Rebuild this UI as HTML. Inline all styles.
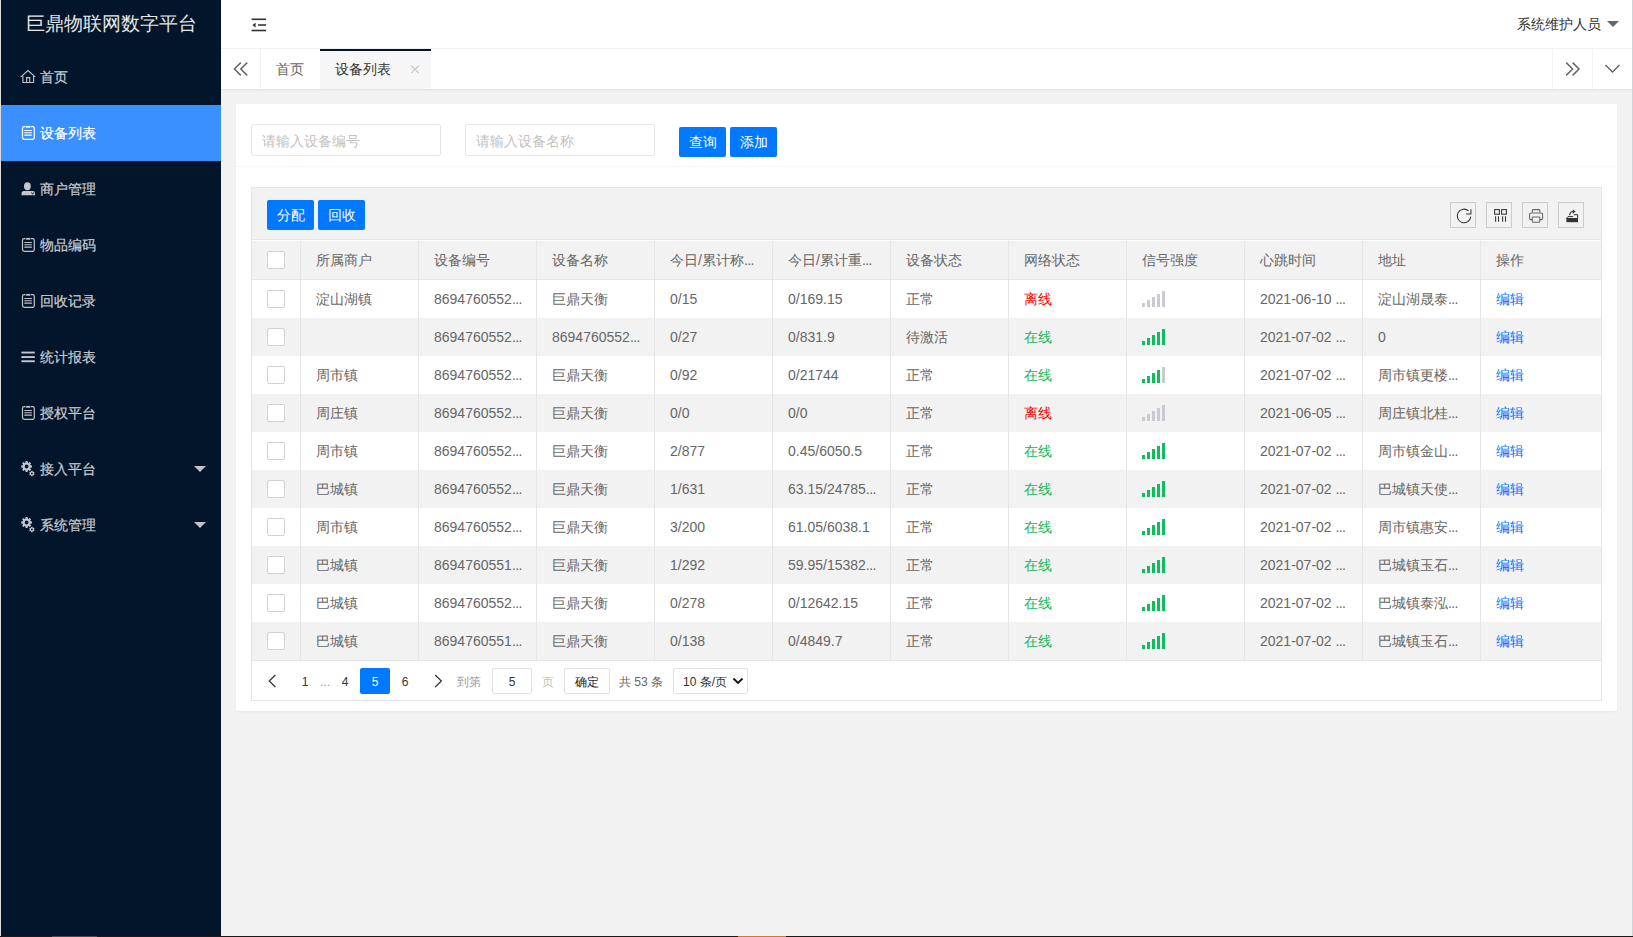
<!DOCTYPE html>
<html><head><meta charset="utf-8">
<style>
*{box-sizing:border-box;margin:0;padding:0}
html,body{width:1633px;height:937px;overflow:hidden;background:#f2f2f2;font-family:"Liberation Sans",sans-serif;font-size:14px;color:#666}
.a{position:absolute}
#edgeL{left:0;top:0;width:1px;height:937px;background:#dcdcdc}
#edgeR{left:1632px;top:0;width:1px;height:937px;background:#cfd2d6}
#bottom{left:0;top:936px;width:1633px;height:1px;background:#1a1a1a}
#side{left:1px;top:0;width:220px;height:936px;background:#03152a}
#logo{left:0;top:0;width:220px;height:49px;line-height:48px;text-align:center;color:#e6e6e6;font-size:19px}
.mi{left:0;width:220px;height:56px;line-height:56px;color:#c9ccd1;font-size:14px;-webkit-text-stroke:0.2px currentColor}
.mi .ic{position:absolute;left:21px;top:22px;width:14px;height:14px}
.mi .tx{position:absolute;left:39px;top:0}
.mi.on{background:#3a90fe;color:#fff}
.mi .dd{position:absolute;left:193px;top:25px;width:0;height:0;border-left:6px solid transparent;border-right:6px solid transparent;border-top:6px solid #c2c2c2}
#hdr{left:221px;top:0;width:1411px;height:48px;background:#fff}
#tabs{left:221px;top:48px;width:1411px;height:41px;background:#fff;border-top:1px solid #f0f0f0;box-shadow:0 1px 2px rgba(0,0,0,.08)}

#tog{left:251px;top:17px}
#user{left:1517px;top:14px;font-size:14px;color:#333;line-height:20px}
#utri{left:1607px;top:21px;width:0;height:0;border-left:6px solid transparent;border-right:6px solid transparent;border-top:6px solid #666}
.tb{top:49px;height:40px;line-height:40px}
#card{left:236px;top:104px;width:1381px;height:607px;background:#fff;border-radius:2px;box-shadow:0 1px 2px rgba(0,0,0,.05)}
.inp{top:124px;width:190px;height:32px;border:1px solid #e6e6e6;border-radius:2px;background:#fff;color:#c2c2c2;font-size:14px;line-height:32px;padding-left:10px}
.btn{height:30px;line-height:30px;width:47px;background:#0078ff;color:#fff;border-radius:2px;text-align:center;font-size:14px}
#sep{left:236px;top:166px;width:1381px;height:1px;background:#f6f6f6}
#tbl{left:251px;top:187px;width:1351px;height:514px;border:1px solid #e6e6e6;background:#fff}
#tool{left:252px;top:188px;width:1349px;height:52px;background:#f2f2f2;border-bottom:1px solid #e6e6e6}
.ti{top:202px;width:26px;height:26px;border:1px solid #ccc;background:#f2f2f2}

.td{height:38px;line-height:38px;white-space:nowrap;font-size:14px;color:#666}
.td.on{color:#12b85e}.td.off{color:#ff0000}.td.ed{color:#0078ff}
.cb{left:267px;width:18px;height:18px;border:1px solid #d2d2d2;border-radius:2px;background:#fff}
.sig{width:18px;height:16px}.sig i{position:absolute;width:3px}

.pg{top:668px;height:26px;line-height:28px;font-size:12px;white-space:nowrap}
.el{letter-spacing:-0.6px}
</style></head><body>
<div class="a" id="edgeL"></div>
<div class="a" id="side">
  <div class="a" id="logo">巨鼎物联网数字平台</div>
  <div class="a mi" style="top:49px"><span class="tx">首页</span></div>
  <div class="a mi on" style="top:105px"><span class="tx">设备列表</span></div>
  <div class="a mi" style="top:161px"><span class="tx">商户管理</span></div>
  <div class="a mi" style="top:217px"><span class="tx">物品编码</span></div>
  <div class="a mi" style="top:273px"><span class="tx">回收记录</span></div>
  <div class="a mi" style="top:329px"><span class="tx">统计报表</span></div>
  <div class="a mi" style="top:385px"><span class="tx">授权平台</span></div>
  <div class="a mi" style="top:441px"><span class="tx">接入平台</span></div>
  <div class="a mi" style="top:497px"><span class="tx">系统管理</span></div>
</div>
<div class="a" id="hdr"></div>
<svg class="a" style="left:0;top:0;z-index:5" width="221" height="560" viewBox="0 0 221 560">
 <g fill="none" stroke="#c3c6cd" stroke-width="1.1">
  <path d="M20.8 76.8 L28 70.6 L35.2 76.8"/>
  <path d="M22.9 76 V82.5 H33.6 V76"/>
  <path d="M26.6 82.5 V77.6 H29.7 V82.5"/>
 </g>
 <g transform="translate(0,0)" stroke="#fff" fill="#fff">
   <path fill="none" stroke-width="1.2" d="M25.6 126.7 H24.2 Q22.5 126.7 22.5 128.4 V137.6 Q22.5 139.3 24.2 139.3 H32.6 Q34.3 139.3 34.3 137.6 V128.4 Q34.3 126.7 32.6 126.7 H30.8"/>
   <rect x="26.2" y="125.9" width="4" height="1.8" stroke="none"/>
   <path fill="none" stroke-width="1.1" d="M24.3 130.5 H31.9 M24.3 132.8 H31.9 M24.3 135.1 H31.9"/>
  </g>
 <g transform="translate(0,112)" stroke="#c3c6cd" fill="#c3c6cd">
   <path fill="none" stroke-width="1.2" d="M25.6 126.7 H24.2 Q22.5 126.7 22.5 128.4 V137.6 Q22.5 139.3 24.2 139.3 H32.6 Q34.3 139.3 34.3 137.6 V128.4 Q34.3 126.7 32.6 126.7 H30.8"/>
   <rect x="26.2" y="125.9" width="4" height="1.8" stroke="none"/>
   <path fill="none" stroke-width="1.1" d="M24.3 130.5 H31.9 M24.3 132.8 H31.9 M24.3 135.1 H31.9"/>
  </g>
 <g transform="translate(0,168)" stroke="#c3c6cd" fill="#c3c6cd">
   <path fill="none" stroke-width="1.2" d="M25.6 126.7 H24.2 Q22.5 126.7 22.5 128.4 V137.6 Q22.5 139.3 24.2 139.3 H32.6 Q34.3 139.3 34.3 137.6 V128.4 Q34.3 126.7 32.6 126.7 H30.8"/>
   <rect x="26.2" y="125.9" width="4" height="1.8" stroke="none"/>
   <path fill="none" stroke-width="1.1" d="M24.3 130.5 H31.9 M24.3 132.8 H31.9 M24.3 135.1 H31.9"/>
  </g>
 <g transform="translate(0,280)" stroke="#c3c6cd" fill="#c3c6cd">
   <path fill="none" stroke-width="1.2" d="M25.6 126.7 H24.2 Q22.5 126.7 22.5 128.4 V137.6 Q22.5 139.3 24.2 139.3 H32.6 Q34.3 139.3 34.3 137.6 V128.4 Q34.3 126.7 32.6 126.7 H30.8"/>
   <rect x="26.2" y="125.9" width="4" height="1.8" stroke="none"/>
   <path fill="none" stroke-width="1.1" d="M24.3 130.5 H31.9 M24.3 132.8 H31.9 M24.3 135.1 H31.9"/>
  </g>
 <!-- person -->
 <g fill="#c3c6cd">
  <ellipse cx="27.4" cy="186.2" rx="3.4" ry="4"/>
  <path d="M21.5 195.2 V193 Q21.5 191 24 191 H33 Q35 191 35 193 V195.2 Z"/>
  <path d="M31.5 192.3 L32.6 194.3 L33.7 192.3" stroke="#03152a" stroke-width="0.8" fill="none"/>
 </g>
 <!-- lines -->
 <g fill="#c3c6cd">
  <rect x="21.4" y="351.6" width="13.4" height="1.9"/>
  <rect x="21.4" y="356.1" width="13.4" height="1.9"/>
  <rect x="21.4" y="360.3" width="13.4" height="1.9"/>
 </g>
 <g fill="#c3c6cd" fill-rule="evenodd">
  <path d="M25.63 461.09 L27.57 461.09 L27.80 462.58 L28.52 462.88 L29.74 461.99 L31.11 463.36 L30.22 464.58 L30.52 465.30 L32.01 465.53 L32.01 467.47 L30.52 467.70 L30.22 468.42 L31.11 469.64 L29.74 471.01 L28.52 470.12 L27.80 470.42 L27.57 471.91 L25.63 471.91 L25.40 470.42 L24.68 470.12 L23.46 471.01 L22.09 469.64 L22.98 468.42 L22.68 467.70 L21.19 467.47 L21.19 465.53 L22.68 465.30 L22.98 464.58 L22.09 463.36 L23.46 461.99 L24.68 462.88 L25.40 462.58 Z M28.50 466.50 A1.9 1.9 0 1 0 24.70 466.50 A1.9 1.9 0 1 0 28.50 466.50 Z"/>
  <path d="M31.25 470.78 L32.55 470.78 L32.63 471.53 L33.24 471.88 L33.93 471.57 L34.58 472.70 L33.97 473.15 L33.97 473.85 L34.58 474.30 L33.93 475.43 L33.24 475.12 L32.63 475.47 L32.55 476.22 L31.25 476.22 L31.17 475.47 L30.56 475.12 L29.87 475.43 L29.22 474.30 L29.83 473.85 L29.83 473.15 L29.22 472.70 L29.87 471.57 L30.56 471.88 L31.17 471.53 Z M32.80 473.50 A0.9 0.9 0 1 0 31.00 473.50 A0.9 0.9 0 1 0 32.80 473.50 Z"/>
 </g>
 <g transform="translate(0,56)" fill="#c3c6cd" fill-rule="evenodd">
  <path d="M25.63 461.09 L27.57 461.09 L27.80 462.58 L28.52 462.88 L29.74 461.99 L31.11 463.36 L30.22 464.58 L30.52 465.30 L32.01 465.53 L32.01 467.47 L30.52 467.70 L30.22 468.42 L31.11 469.64 L29.74 471.01 L28.52 470.12 L27.80 470.42 L27.57 471.91 L25.63 471.91 L25.40 470.42 L24.68 470.12 L23.46 471.01 L22.09 469.64 L22.98 468.42 L22.68 467.70 L21.19 467.47 L21.19 465.53 L22.68 465.30 L22.98 464.58 L22.09 463.36 L23.46 461.99 L24.68 462.88 L25.40 462.58 Z M28.50 466.50 A1.9 1.9 0 1 0 24.70 466.50 A1.9 1.9 0 1 0 28.50 466.50 Z"/>
  <path d="M31.25 470.78 L32.55 470.78 L32.63 471.53 L33.24 471.88 L33.93 471.57 L34.58 472.70 L33.97 473.15 L33.97 473.85 L34.58 474.30 L33.93 475.43 L33.24 475.12 L32.63 475.47 L32.55 476.22 L31.25 476.22 L31.17 475.47 L30.56 475.12 L29.87 475.43 L29.22 474.30 L29.83 473.85 L29.83 473.15 L29.22 472.70 L29.87 471.57 L30.56 471.88 L31.17 471.53 Z M32.80 473.50 A0.9 0.9 0 1 0 31.00 473.50 A0.9 0.9 0 1 0 32.80 473.50 Z"/>
 </g>
 <path d="M194 466 H206 L200 472 Z" fill="#c0c3ca"/>
 <path d="M194 522 H206 L200 528 Z" fill="#c0c3ca"/>
</svg>

<div class="a" id="tabs"></div>

<svg class="a" id="tog" width="16" height="16" viewBox="0 0 16 16"><g fill="#333"><rect x="0.6" y="1.5" width="14.5" height="1.6"/><rect x="7.1" y="7.2" width="8" height="1.6"/><rect x="0.6" y="12.7" width="14.5" height="1.6"/><path d="M1.4 8.1 L4.6 5.7 L4.6 10.5 Z"/></g></svg>
<div class="a" id="user">系统维护人员</div>
<div class="a" id="utri"></div>
<!-- tabs -->
<div class="a" style="left:260px;top:49px;width:1px;height:40px;background:#f2f2f2"></div>
<svg class="a" style="left:232px;top:61px" width="17" height="17" viewBox="0 0 17 17"><g fill="none" stroke="#666" stroke-width="1.5"><path d="M8.8 1.6 L2.4 8 L8.8 14.4"/><path d="M15.2 1.6 L8.8 8 L15.2 14.4"/></g></svg>
<div class="a tb" style="left:261px;width:58px;text-align:center;color:#666">首页</div>
<div class="a tb" style="left:320px;width:111px;background:#f6f6f6;color:#333"><span style="position:absolute;left:15px">设备列表</span></div>
<div class="a" style="left:320px;top:49px;width:111px;height:2px;background:#03152a"></div>
<svg class="a" style="left:408px;top:62px" width="14" height="14" viewBox="408 62 14 14"><path d="M411.3 65.6 L418.7 73 M418.7 65.6 L411.3 73" stroke="#bdbdbd" stroke-width="1.05" fill="none"/></svg>
<div class="a" style="left:1552px;top:49px;width:1px;height:40px;background:#f2f2f2"></div>
<div class="a" style="left:1592px;top:49px;width:1px;height:40px;background:#f2f2f2"></div>
<svg class="a" style="left:1564px;top:61px" width="17" height="17" viewBox="0 0 17 17"><g fill="none" stroke="#666" stroke-width="1.5"><path d="M2.2 1.6 L8.6 8 L2.2 14.4"/><path d="M8.6 1.6 L15 8 L8.6 14.4"/></g></svg>
<svg class="a" style="left:1604px;top:62px" width="17" height="12" viewBox="0 0 17 12"><path d="M1.5 3 L8.5 10 L15.5 3" fill="none" stroke="#666" stroke-width="1.5"/></svg>
<!-- card -->
<div class="a" id="card"></div>
<div class="a inp" style="left:251px">请输入设备编号</div>
<div class="a inp" style="left:465px">请输入设备名称</div>
<div class="a btn" style="left:679px;top:127px">查询</div>
<div class="a btn" style="left:730px;top:127px">添加</div>
<div class="a" id="sep"></div>
<div class="a" id="tbl"></div>
<div class="a" id="tool"></div>
<div class="a btn" style="left:267px;top:200px">分配</div>
<div class="a btn" style="left:318px;top:200px">回收</div>
<div class="a ti" style="left:1450px"></div>
<div class="a ti" style="left:1486px"></div>
<div class="a ti" style="left:1522px"></div>
<div class="a ti" style="left:1558px"></div>
<!-- TABLE -->
<div class="a" style="left:252px;top:241px;width:1349px;height:38px;background:#f2f2f2"></div>
<div class="a" style="left:252px;top:279px;width:1349px;height:1px;background:#e6e6e6"></div>
<div class="a" style="left:252px;top:318px;width:1349px;height:38px;background:#f2f2f2"></div>
<div class="a" style="left:252px;top:394px;width:1349px;height:38px;background:#f2f2f2"></div>
<div class="a" style="left:252px;top:470px;width:1349px;height:38px;background:#f2f2f2"></div>
<div class="a" style="left:252px;top:546px;width:1349px;height:38px;background:#f2f2f2"></div>
<div class="a" style="left:252px;top:622px;width:1349px;height:38px;background:#f2f2f2"></div>
<div class="a" style="left:252px;top:660px;width:1349px;height:1px;background:#e6e6e6"></div>
<div class="a" style="left:300px;top:241px;width:1px;height:419px;background:#e6e6e6"></div>
<div class="a" style="left:418px;top:241px;width:1px;height:419px;background:#e6e6e6"></div>
<div class="a" style="left:536px;top:241px;width:1px;height:419px;background:#e6e6e6"></div>
<div class="a" style="left:654px;top:241px;width:1px;height:419px;background:#e6e6e6"></div>
<div class="a" style="left:772px;top:241px;width:1px;height:419px;background:#e6e6e6"></div>
<div class="a" style="left:890px;top:241px;width:1px;height:419px;background:#e6e6e6"></div>
<div class="a" style="left:1008px;top:241px;width:1px;height:419px;background:#e6e6e6"></div>
<div class="a" style="left:1126px;top:241px;width:1px;height:419px;background:#e6e6e6"></div>
<div class="a" style="left:1244px;top:241px;width:1px;height:419px;background:#e6e6e6"></div>
<div class="a" style="left:1362px;top:241px;width:1px;height:419px;background:#e6e6e6"></div>
<div class="a" style="left:1480px;top:241px;width:1px;height:419px;background:#e6e6e6"></div>
<div class="a cb" style="top:251px"></div>
<div class="a cb" style="top:290px"></div>
<div class="a cb" style="top:328px"></div>
<div class="a cb" style="top:366px"></div>
<div class="a cb" style="top:404px"></div>
<div class="a cb" style="top:442px"></div>
<div class="a cb" style="top:480px"></div>
<div class="a cb" style="top:518px"></div>
<div class="a cb" style="top:556px"></div>
<div class="a cb" style="top:594px"></div>
<div class="a cb" style="top:632px"></div>
<div class="a td" style="left:316px;top:241px">所属商户</div>
<div class="a td" style="left:434px;top:241px">设备编号</div>
<div class="a td" style="left:552px;top:241px">设备名称</div>
<div class="a td" style="left:670px;top:241px">今日/累计称<span class="el">...</span></div>
<div class="a td" style="left:788px;top:241px">今日/累计重<span class="el">...</span></div>
<div class="a td" style="left:906px;top:241px">设备状态</div>
<div class="a td" style="left:1024px;top:241px">网络状态</div>
<div class="a td" style="left:1142px;top:241px">信号强度</div>
<div class="a td" style="left:1260px;top:241px">心跳时间</div>
<div class="a td" style="left:1378px;top:241px">地址</div>
<div class="a td" style="left:1496px;top:241px">操作</div>
<div class="a td" style="left:316px;top:280px">淀山湖镇</div>
<div class="a td" style="left:434px;top:280px">8694760552<span class="el">...</span></div>
<div class="a td" style="left:552px;top:280px">巨鼎天衡</div>
<div class="a td" style="left:670px;top:280px">0/15</div>
<div class="a td" style="left:788px;top:280px">0/169.15</div>
<div class="a td" style="left:906px;top:280px">正常</div>
<div class="a td off" style="left:1024px;top:280px">离线</div>
<div class="a sig" style="left:1142px;top:291px"><i style="left:0px;top:12px;height:4px;background:#c9cbd1"></i><i style="left:5px;top:9px;height:7px;background:#c9cbd1"></i><i style="left:10px;top:6px;height:10px;background:#c9cbd1"></i><i style="left:15px;top:3px;height:13px;background:#c9cbd1"></i><i style="left:20px;top:0px;height:16px;background:#c9cbd1"></i></div>
<div class="a td" style="left:1260px;top:280px">2021-06-10 <span class="el">...</span></div>
<div class="a td" style="left:1378px;top:280px">淀山湖晟泰<span class="el">...</span></div>
<div class="a td ed" style="left:1496px;top:280px">编辑</div>
<div class="a td" style="left:434px;top:318px">8694760552<span class="el">...</span></div>
<div class="a td" style="left:552px;top:318px">8694760552<span class="el">...</span></div>
<div class="a td" style="left:670px;top:318px">0/27</div>
<div class="a td" style="left:788px;top:318px">0/831.9</div>
<div class="a td" style="left:906px;top:318px">待激活</div>
<div class="a td on" style="left:1024px;top:318px">在线</div>
<div class="a sig" style="left:1142px;top:329px"><i style="left:0px;top:12px;height:4px;background:#0fbd5e"></i><i style="left:5px;top:9px;height:7px;background:#0fbd5e"></i><i style="left:10px;top:6px;height:10px;background:#0fbd5e"></i><i style="left:15px;top:3px;height:13px;background:#0fbd5e"></i><i style="left:20px;top:0px;height:16px;background:#0fbd5e"></i></div>
<div class="a td" style="left:1260px;top:318px">2021-07-02 <span class="el">...</span></div>
<div class="a td" style="left:1378px;top:318px">0</div>
<div class="a td ed" style="left:1496px;top:318px">编辑</div>
<div class="a td" style="left:316px;top:356px">周市镇</div>
<div class="a td" style="left:434px;top:356px">8694760552<span class="el">...</span></div>
<div class="a td" style="left:552px;top:356px">巨鼎天衡</div>
<div class="a td" style="left:670px;top:356px">0/92</div>
<div class="a td" style="left:788px;top:356px">0/21744</div>
<div class="a td" style="left:906px;top:356px">正常</div>
<div class="a td on" style="left:1024px;top:356px">在线</div>
<div class="a sig" style="left:1142px;top:367px"><i style="left:0px;top:12px;height:4px;background:#0fbd5e"></i><i style="left:5px;top:9px;height:7px;background:#0fbd5e"></i><i style="left:10px;top:6px;height:10px;background:#0fbd5e"></i><i style="left:15px;top:3px;height:13px;background:#0fbd5e"></i><i style="left:20px;top:0px;height:16px;background:#c9cbd1"></i></div>
<div class="a td" style="left:1260px;top:356px">2021-07-02 <span class="el">...</span></div>
<div class="a td" style="left:1378px;top:356px">周市镇更楼<span class="el">...</span></div>
<div class="a td ed" style="left:1496px;top:356px">编辑</div>
<div class="a td" style="left:316px;top:394px">周庄镇</div>
<div class="a td" style="left:434px;top:394px">8694760552<span class="el">...</span></div>
<div class="a td" style="left:552px;top:394px">巨鼎天衡</div>
<div class="a td" style="left:670px;top:394px">0/0</div>
<div class="a td" style="left:788px;top:394px">0/0</div>
<div class="a td" style="left:906px;top:394px">正常</div>
<div class="a td off" style="left:1024px;top:394px">离线</div>
<div class="a sig" style="left:1142px;top:405px"><i style="left:0px;top:12px;height:4px;background:#c9cbd1"></i><i style="left:5px;top:9px;height:7px;background:#c9cbd1"></i><i style="left:10px;top:6px;height:10px;background:#c9cbd1"></i><i style="left:15px;top:3px;height:13px;background:#c9cbd1"></i><i style="left:20px;top:0px;height:16px;background:#c9cbd1"></i></div>
<div class="a td" style="left:1260px;top:394px">2021-06-05 <span class="el">...</span></div>
<div class="a td" style="left:1378px;top:394px">周庄镇北桂<span class="el">...</span></div>
<div class="a td ed" style="left:1496px;top:394px">编辑</div>
<div class="a td" style="left:316px;top:432px">周市镇</div>
<div class="a td" style="left:434px;top:432px">8694760552<span class="el">...</span></div>
<div class="a td" style="left:552px;top:432px">巨鼎天衡</div>
<div class="a td" style="left:670px;top:432px">2/877</div>
<div class="a td" style="left:788px;top:432px">0.45/6050.5</div>
<div class="a td" style="left:906px;top:432px">正常</div>
<div class="a td on" style="left:1024px;top:432px">在线</div>
<div class="a sig" style="left:1142px;top:443px"><i style="left:0px;top:12px;height:4px;background:#0fbd5e"></i><i style="left:5px;top:9px;height:7px;background:#0fbd5e"></i><i style="left:10px;top:6px;height:10px;background:#0fbd5e"></i><i style="left:15px;top:3px;height:13px;background:#0fbd5e"></i><i style="left:20px;top:0px;height:16px;background:#0fbd5e"></i></div>
<div class="a td" style="left:1260px;top:432px">2021-07-02 <span class="el">...</span></div>
<div class="a td" style="left:1378px;top:432px">周市镇金山<span class="el">...</span></div>
<div class="a td ed" style="left:1496px;top:432px">编辑</div>
<div class="a td" style="left:316px;top:470px">巴城镇</div>
<div class="a td" style="left:434px;top:470px">8694760552<span class="el">...</span></div>
<div class="a td" style="left:552px;top:470px">巨鼎天衡</div>
<div class="a td" style="left:670px;top:470px">1/631</div>
<div class="a td" style="left:788px;top:470px">63.15/24785<span class="el">...</span></div>
<div class="a td" style="left:906px;top:470px">正常</div>
<div class="a td on" style="left:1024px;top:470px">在线</div>
<div class="a sig" style="left:1142px;top:481px"><i style="left:0px;top:12px;height:4px;background:#0fbd5e"></i><i style="left:5px;top:9px;height:7px;background:#0fbd5e"></i><i style="left:10px;top:6px;height:10px;background:#0fbd5e"></i><i style="left:15px;top:3px;height:13px;background:#0fbd5e"></i><i style="left:20px;top:0px;height:16px;background:#0fbd5e"></i></div>
<div class="a td" style="left:1260px;top:470px">2021-07-02 <span class="el">...</span></div>
<div class="a td" style="left:1378px;top:470px">巴城镇天使<span class="el">...</span></div>
<div class="a td ed" style="left:1496px;top:470px">编辑</div>
<div class="a td" style="left:316px;top:508px">周市镇</div>
<div class="a td" style="left:434px;top:508px">8694760552<span class="el">...</span></div>
<div class="a td" style="left:552px;top:508px">巨鼎天衡</div>
<div class="a td" style="left:670px;top:508px">3/200</div>
<div class="a td" style="left:788px;top:508px">61.05/6038.1</div>
<div class="a td" style="left:906px;top:508px">正常</div>
<div class="a td on" style="left:1024px;top:508px">在线</div>
<div class="a sig" style="left:1142px;top:519px"><i style="left:0px;top:12px;height:4px;background:#0fbd5e"></i><i style="left:5px;top:9px;height:7px;background:#0fbd5e"></i><i style="left:10px;top:6px;height:10px;background:#0fbd5e"></i><i style="left:15px;top:3px;height:13px;background:#0fbd5e"></i><i style="left:20px;top:0px;height:16px;background:#0fbd5e"></i></div>
<div class="a td" style="left:1260px;top:508px">2021-07-02 <span class="el">...</span></div>
<div class="a td" style="left:1378px;top:508px">周市镇惠安<span class="el">...</span></div>
<div class="a td ed" style="left:1496px;top:508px">编辑</div>
<div class="a td" style="left:316px;top:546px">巴城镇</div>
<div class="a td" style="left:434px;top:546px">8694760551<span class="el">...</span></div>
<div class="a td" style="left:552px;top:546px">巨鼎天衡</div>
<div class="a td" style="left:670px;top:546px">1/292</div>
<div class="a td" style="left:788px;top:546px">59.95/15382<span class="el">...</span></div>
<div class="a td" style="left:906px;top:546px">正常</div>
<div class="a td on" style="left:1024px;top:546px">在线</div>
<div class="a sig" style="left:1142px;top:557px"><i style="left:0px;top:12px;height:4px;background:#0fbd5e"></i><i style="left:5px;top:9px;height:7px;background:#0fbd5e"></i><i style="left:10px;top:6px;height:10px;background:#0fbd5e"></i><i style="left:15px;top:3px;height:13px;background:#0fbd5e"></i><i style="left:20px;top:0px;height:16px;background:#0fbd5e"></i></div>
<div class="a td" style="left:1260px;top:546px">2021-07-02 <span class="el">...</span></div>
<div class="a td" style="left:1378px;top:546px">巴城镇玉石<span class="el">...</span></div>
<div class="a td ed" style="left:1496px;top:546px">编辑</div>
<div class="a td" style="left:316px;top:584px">巴城镇</div>
<div class="a td" style="left:434px;top:584px">8694760552<span class="el">...</span></div>
<div class="a td" style="left:552px;top:584px">巨鼎天衡</div>
<div class="a td" style="left:670px;top:584px">0/278</div>
<div class="a td" style="left:788px;top:584px">0/12642.15</div>
<div class="a td" style="left:906px;top:584px">正常</div>
<div class="a td on" style="left:1024px;top:584px">在线</div>
<div class="a sig" style="left:1142px;top:595px"><i style="left:0px;top:12px;height:4px;background:#0fbd5e"></i><i style="left:5px;top:9px;height:7px;background:#0fbd5e"></i><i style="left:10px;top:6px;height:10px;background:#0fbd5e"></i><i style="left:15px;top:3px;height:13px;background:#0fbd5e"></i><i style="left:20px;top:0px;height:16px;background:#0fbd5e"></i></div>
<div class="a td" style="left:1260px;top:584px">2021-07-02 <span class="el">...</span></div>
<div class="a td" style="left:1378px;top:584px">巴城镇泰泓<span class="el">...</span></div>
<div class="a td ed" style="left:1496px;top:584px">编辑</div>
<div class="a td" style="left:316px;top:622px">巴城镇</div>
<div class="a td" style="left:434px;top:622px">8694760551<span class="el">...</span></div>
<div class="a td" style="left:552px;top:622px">巨鼎天衡</div>
<div class="a td" style="left:670px;top:622px">0/138</div>
<div class="a td" style="left:788px;top:622px">0/4849.7</div>
<div class="a td" style="left:906px;top:622px">正常</div>
<div class="a td on" style="left:1024px;top:622px">在线</div>
<div class="a sig" style="left:1142px;top:633px"><i style="left:0px;top:12px;height:4px;background:#0fbd5e"></i><i style="left:5px;top:9px;height:7px;background:#0fbd5e"></i><i style="left:10px;top:6px;height:10px;background:#0fbd5e"></i><i style="left:15px;top:3px;height:13px;background:#0fbd5e"></i><i style="left:20px;top:0px;height:16px;background:#0fbd5e"></i></div>
<div class="a td" style="left:1260px;top:622px">2021-07-02 <span class="el">...</span></div>
<div class="a td" style="left:1378px;top:622px">巴城镇玉石<span class="el">...</span></div>
<div class="a td ed" style="left:1496px;top:622px">编辑</div>
<!-- /TABLE -->
<svg class="a" style="left:1440px;top:200px;z-index:4" width="150" height="30" viewBox="1440 200 150 30">
 <g fill="none" stroke="#333" stroke-width="1.05">
  <path d="M1470.8 216.6 A6.8 6.8 0 1 1 1468.6 210.9"/>
  <path d="M1466.2 213.9 H1470.9 V209.3"/>
  <rect x="1494.6" y="209.6" width="4.8" height="4.6"/>
  <rect x="1501.6" y="209.6" width="4.8" height="4.6"/>
  <path d="M1495.6 216.3 V221.8 M1498.5 216.3 V221.8 M1502.6 216.3 V221.8 M1505.5 216.3 V221.8"/>
 </g>
 <g fill="none" stroke="#666" stroke-width="1.05">
  <path d="M1532.3 212.4 V210.4 Q1532.3 209.6 1533.1 209.6 H1539 Q1539.8 209.6 1539.8 210.4 V212.4"/>
  <path d="M1532.3 219.6 H1530.6 Q1529.6 219.6 1529.6 218.6 V214 Q1529.6 213 1530.6 213 H1541.6 Q1542.6 213 1542.6 214 V218.6 Q1542.6 219.6 1541.6 219.6 H1539.8"/>
  <rect x="1532.3" y="217" width="7.5" height="5.2" rx="0.8"/>
 </g>
 <g fill="#333">
  <path d="M1566.4 222.2 V218 H1578 V222.2 Z"/>
  <path d="M1566.3 218.4 L1568 216.6 H1573.2 M1573.8 214.7 H1577.6 V218.2" fill="none" stroke="#333" stroke-width="1"/>
  <path d="M1569.7 215.2 Q1569.8 211.5 1573.2 211.5" fill="none" stroke="#333" stroke-width="1.2"/>
  <path d="M1572.8 209.5 L1575.6 211.6 L1572.8 213.7 Z"/>
 </g>
</svg>

<svg class="a" style="left:260px;top:668px" width="200" height="26" viewBox="260 668 200 26">
 <path d="M275.4 675 L269.2 681 L275.4 687" fill="none" stroke="#333" stroke-width="1.2"/>
 <path d="M435.2 675 L441.4 681 L435.2 687" fill="none" stroke="#333" stroke-width="1.2"/>
</svg>
<div class="a pg" style="left:297px;width:16px;text-align:center;color:#333">1</div>
<div class="a pg" style="left:317px;width:16px;text-align:center;color:#999">...</div>
<div class="a pg" style="left:337px;width:16px;text-align:center;color:#333">4</div>
<div class="a pg" style="left:360px;width:30px;text-align:center;color:#fff;background:#0078ff;border-radius:2px">5</div>
<div class="a pg" style="left:397px;width:16px;text-align:center;color:#333">6</div>
<div class="a pg" style="left:457px;color:#999">到第</div>
<div class="a pg" style="left:492px;width:40px;border:1px solid #e2e2e2;border-radius:2px;text-align:center;color:#333;line-height:26px">5</div>
<div class="a pg" style="left:542px;color:#c2c2c2">页</div>
<div class="a pg" style="left:564px;width:46px;border:1px solid #e2e2e2;border-radius:2px;text-align:center;color:#222;line-height:26px">确定</div>
<div class="a pg" style="left:619px;color:#666">共 53 条</div>
<div class="a pg" style="left:673px;width:75px;border:1px solid #e2e2e2;border-radius:2px;color:#333;line-height:26px;padding-left:9px">10 条/页</div>
<svg class="a" style="left:730px;top:675px" width="16" height="12" viewBox="0 0 16 12"><path d="M3.5 3.5 L8 8 L12.5 3.5" fill="none" stroke="#111" stroke-width="1.8"/></svg>

<div class="a" id="edgeR"></div>
<div class="a" id="bottom"></div><div class="a" style="left:52px;top:936px;width:45px;height:1px;background:#4a4a4a"></div><div class="a" style="left:738px;top:936px;width:48px;height:1px;background:#c87a3a"></div>
</body></html>
